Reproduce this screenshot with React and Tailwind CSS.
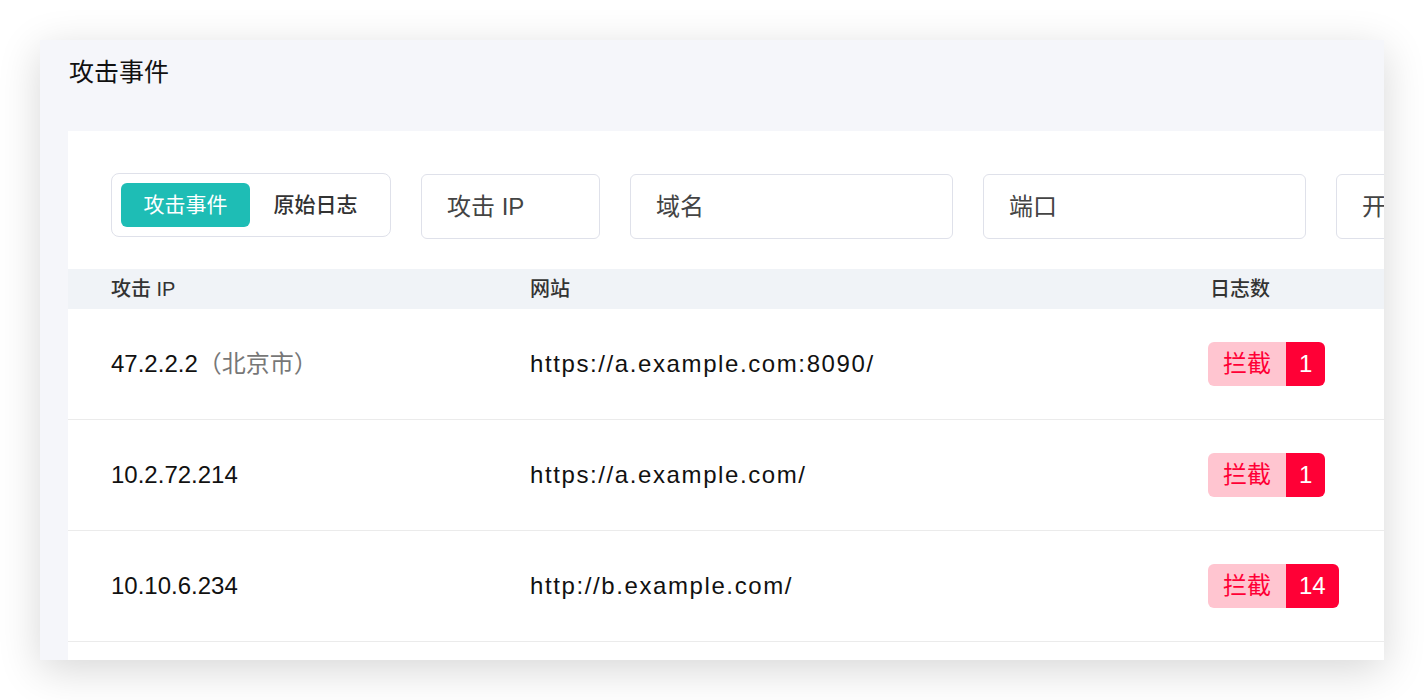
export default function App() {
  const font = { fontFamily: '"Liberation Sans", "Noto Sans CJK SC", sans-serif' };
  const rows = [
    { ip: "47.2.2.2", loc: "（北京市）", site: "https://a.example.com:8090/", n: "1" },
    { ip: "10.2.72.214", loc: null, site: "https://a.example.com/", n: "1" },
    { ip: "10.10.6.234", loc: null, site: "http://b.example.com/", n: "14" },
  ];
  return (
    <div className="bg-white w-[1424px] h-[700px] p-10 overflow-hidden" style={font}>
      <div className="w-[1344px] h-[620px] bg-[#f5f6fa] overflow-hidden shadow-[0_10px_40px_rgba(0,0,0,0.16)] flex flex-col">
        <div className="pl-[29px] pt-4 text-[25px] leading-8 text-[#111]">攻击事件</div>
        <div className="mt-[43px] ml-[28px] w-[1400px] flex-1 bg-white">
          <div className="flex items-start gap-[30px] pt-[42px] pl-[43px]">
            <div className="w-[280px] h-[64px] shrink-0 border border-[#dfe1ea] rounded-lg p-[9px] flex">
              <div className="w-[129px] h-[44px] rounded-md bg-[#1ebdb5] text-white text-[21px] flex items-center justify-center">攻击事件</div>
              <div className="w-[131px] h-[44px] text-[#333] text-[21px] font-medium flex items-center justify-center">原始日志</div>
            </div>
            <div className="mt-px w-[179px] h-[65px] shrink-0 border border-[#dfe1ea] rounded-md pl-[25px] flex items-center text-[24px] text-[#444]">攻击 IP</div>
            <div className="mt-px w-[323px] h-[65px] shrink-0 border border-[#dfe1ea] rounded-md pl-[25px] flex items-center text-[24px] text-[#444]">域名</div>
            <div className="mt-px w-[323px] h-[65px] shrink-0 border border-[#dfe1ea] rounded-md pl-[25px] flex items-center text-[24px] text-[#444]">端口</div>
            <div className="mt-px w-[323px] h-[65px] shrink-0 border border-[#dfe1ea] rounded-md pl-[25px] flex items-center text-[24px] text-[#444] whitespace-nowrap">开始时间</div>
          </div>
          <div className="mt-[30px]">
            <div className="grid grid-cols-[419px_680px_1fr] h-[40px] bg-[#f0f3f7] items-center text-[20px] font-medium text-[#333]">
              <div className="pl-[43px]">攻击 IP</div>
              <div className="pl-[43px]">网站</div>
              <div className="pl-[43px]">日志数</div>
            </div>
            {rows.map((r, i) => (
              <div key={i} className="grid grid-cols-[419px_680px_1fr] h-[111px] border-b border-[#ebebeb] items-center text-[24px] text-[#111]">
                <div className="pl-[43px] whitespace-nowrap">
                  {r.ip}
                  {r.loc && <span className="text-[#777]">{r.loc}</span>}
                </div>
                <div className="pl-[43px] whitespace-nowrap tracking-[1.6px]">{r.site}</div>
                <div className="pl-[41px]">
                  <div className="inline-flex h-[44px] rounded-md overflow-hidden text-[24px]">
                    <span className="bg-[#ffc5d0] text-[#ff0036] px-[15px] flex items-center">拦截</span>
                    <span className="bg-[#ff0036] text-white px-[13px] flex items-center">{r.n}</span>
                  </div>
                </div>
              </div>
            ))}
          </div>
        </div>
      </div>
    </div>
  );
}
